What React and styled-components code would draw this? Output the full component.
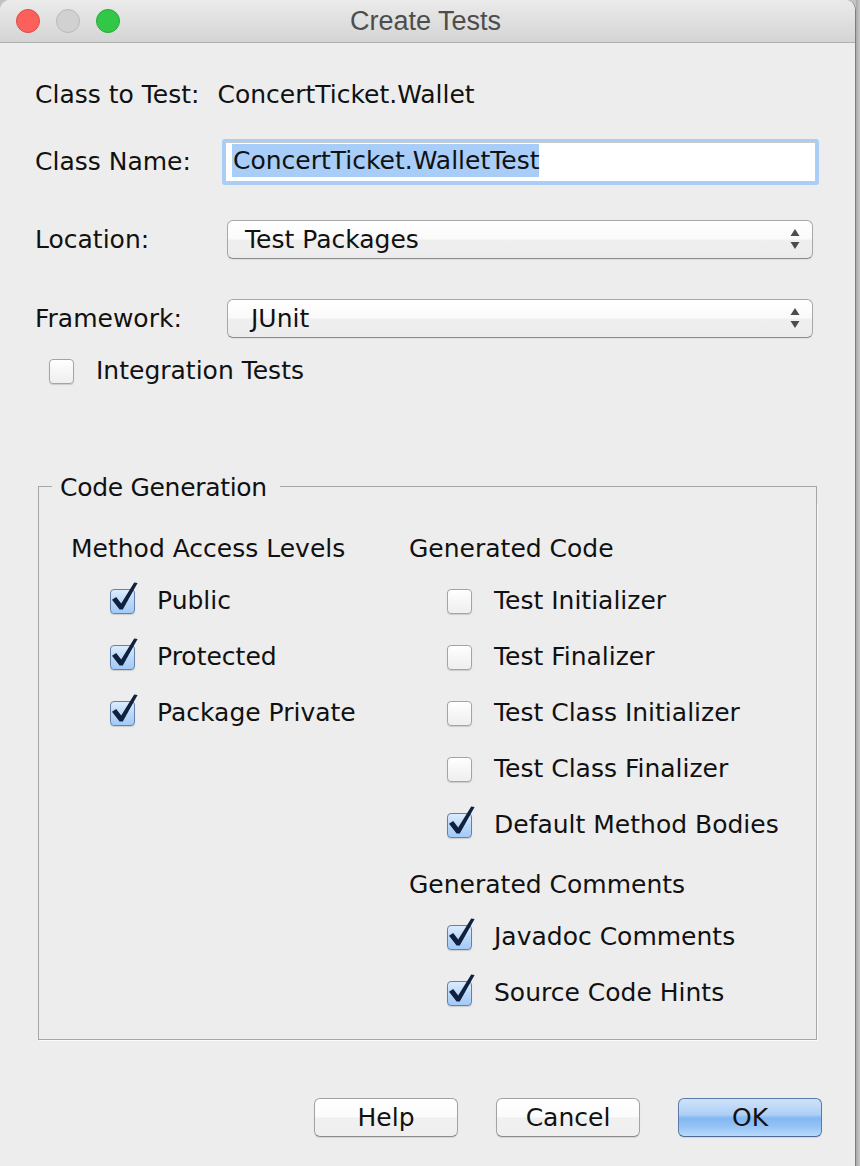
import React from 'react';
import styled, { createGlobalStyle } from 'styled-components';

const Global = createGlobalStyle`
  html, body { margin: 0; padding: 0; background: #c3c3c3; }
  body { font-family: "DejaVu Sans", "Liberation Sans", sans-serif; color: #111; }
  #root { width: 860px; height: 1166px; overflow: hidden; }
`;

const Screen = styled.div`
  display: flex;
  width: 860px;
  height: 1166px;
`;

const Backdrop = styled.div`
  flex: 1;
  background: linear-gradient(90deg, #a9a9a9, #c9c9c9);
`;

const Window = styled.div`
  width: 856px;
  height: 1166px;
  flex: none;
  box-sizing: border-box;
  display: flex;
  flex-direction: column;
  background: #ededed;
  border-right: 1px solid #7e7e7e;
  border-radius: 10px 10px 0 0;
  overflow: hidden;
`;

const TitleBar = styled.div`
  height: 43px;
  flex: none;
  box-sizing: border-box;
  display: grid;
  grid-template-columns: 1fr auto 1fr;
  align-items: center;
  background: linear-gradient(#ebebeb, #d4d4d4);
  border-bottom: 1px solid #afafaf;
`;

const Lights = styled.div`
  display: flex;
  gap: 16px;
  padding-left: 16px;
`;

const Light = styled.span`
  width: 24px;
  height: 24px;
  box-sizing: border-box;
  border-radius: 50%;
  background: ${p => p.$bg};
  border: 1px solid ${p => p.$edge};
`;

const Title = styled.div`
  font-family: "Liberation Sans", Arial, sans-serif;
  font-size: 27px;
  color: #4d4d4d;
  transform: translateX(-2px);
`;

const Body = styled.div`
  flex: 1;
  display: flex;
  flex-direction: column;
  padding-top: 37px;
  font-size: 25px;
`;

const Form = styled.div`
  display: flex;
  flex-direction: column;
  padding: 0 36px 0 35px;
`;

const InfoRow = styled.div`
  height: 30px;
  line-height: 30px;
  display: flex;
  gap: 18px;
  white-space: nowrap;
`;

const FieldRow = styled.div`
  display: grid;
  grid-template-columns: 187px 1fr;
  align-items: center;
  height: ${p => p.$h}px;
  margin-top: ${p => p.$mt}px;
`;

const Label = styled.span`
  line-height: 30px;
  white-space: nowrap;
`;

const TextField = styled.div`
  height: 46px;
  box-sizing: border-box;
  border: 3px solid #a9cdf4;
  border-radius: 3px;
  display: flex;
`;

const TextInner = styled.div`
  flex: 1;
  background: #fff;
  border: 1px solid #c9c9c9;
  padding: 1px 0 0 6px;
  display: flex;
  align-items: flex-start;
`;

const Selected = styled.span`
  background: #a8cdf9;
  height: 33px;
  line-height: 34px;
  padding-left: 1px;
  white-space: nowrap;
`;

const Combo = styled.div`
  height: 39px;
  box-sizing: border-box;
  margin: 0 6px 0 5px;
  border: 1px solid #a8a8a8;
  border-bottom-color: #8c8c8c;
  border-radius: 6px;
  background: linear-gradient(#ffffff 0%, #fafafa 48%, #efefef 52%, #ececec 100%);
  box-shadow: 0 1px 1px rgba(0, 0, 0, 0.06);
  display: flex;
  align-items: center;
  padding-left: ${p => p.$indent}px;
  padding-right: 12px;
`;

const ComboText = styled.span`
  flex: 1;
  line-height: 30px;
  white-space: nowrap;
`;

const Spinner = styled.svg`
  width: 10px;
  height: 21px;
  flex: none;
`;

const CheckRow = styled.div`
  display: flex;
  align-items: center;
  gap: 22px;
  height: ${p => p.$h || 56}px;
  margin-top: ${p => p.$mt || 0}px;
  padding-left: ${p => p.$indent}px;
`;

const Box = styled.span`
  width: 25px;
  height: 25px;
  flex: none;
  box-sizing: border-box;
  border-radius: 4px;
  border: 1px solid ${p => (p.$checked ? '#6482ab' : '#a4a4a4')};
  background: ${p =>
    p.$checked
      ? 'linear-gradient(#dcecfd, #b9d7f8 55%, #a2caf6)'
      : 'linear-gradient(#ffffff, #f6f6f6 50%, #efefef)'};
  box-shadow: 0 1px 1px rgba(0, 0, 0, 0.14);
  display: flex;
`;

const Tick = styled.svg`
  width: 25px;
  height: 25px;
  margin: -1px;
  overflow: visible;
  display: block;
`;

const Group = styled.div`
  margin: 87px 38px 0 38px;
  display: flex;
  flex-direction: column;
`;

const GroupHeader = styled.div`
  display: flex;
  height: 30px;
  &::before,
  &::after {
    content: '';
    margin-top: 13px;
    border-top: 1px solid #a6a6a6;
  }
  &::before {
    width: 13px;
    border-left: 1px solid #a6a6a6;
  }
  &::after {
    flex: 1;
    border-right: 1px solid #a6a6a6;
  }
`;

const GroupTitle = styled.span`
  line-height: 30px;
  padding: 0 13px 0 8px;
  letter-spacing: -0.3px;
  white-space: nowrap;
`;

const GroupBody = styled.div`
  border: 1px solid #a6a6a6;
  border-top: none;
  box-shadow: 1px 1px 0 #fbfbfb;
  padding: 31px 0 18px 32px;
  display: grid;
  grid-template-columns: 338px 1fr;
`;

const Column = styled.div`
  display: flex;
  flex-direction: column;
`;

const Heading = styled.div`
  line-height: 30px;
  height: 30px;
  margin-top: ${p => p.$mt || 0}px;
  margin-bottom: 9px;
  white-space: nowrap;
`;

const ButtonBar = styled.div`
  display: flex;
  justify-content: flex-end;
  gap: 38px;
  margin-top: 58px;
  padding-right: 33px;
`;

const Button = styled.div`
  width: 144px;
  height: 39px;
  box-sizing: border-box;
  border-radius: 6px;
  border: 1px solid ${p => (p.$primary ? '#5d7aa6' : '#a2a2a2')};
  border-bottom-color: ${p => (p.$primary ? '#4d6996' : '#8a8a8a')};
  background: ${p =>
    p.$primary
      ? 'linear-gradient(#cfe3fa 0%, #aecff6 42%, #82b7f1 52%, #95c4f5 75%, #b9dbfc 100%)'
      : 'linear-gradient(#ffffff 0%, #fbfbfb 48%, #f0f0f0 52%, #efefef 100%)'};
  box-shadow: 0 1px 1px rgba(0, 0, 0, 0.1);
  display: flex;
  align-items: center;
  justify-content: center;
  line-height: 30px;
`;

function Checkbox({ checked }) {
  return (
    <Box $checked={checked}>
      {checked && (
        <Tick viewBox="0 0 25 25">
          <path
            d="M2 10.8 L6.2 8 L11.2 14.6 L24.2 -6.6 L27.6 -6 L12.8 20.6 L9.6 20.6 Z"
            fill="#0f213f"
          />
        </Tick>
      )}
    </Box>
  );
}

function Option({ label, checked, indent }) {
  return (
    <CheckRow $indent={indent}>
      <Checkbox checked={checked} />
      <Label>{label}</Label>
    </CheckRow>
  );
}

function ArrowSpinner() {
  return (
    <Spinner viewBox="0 0 10 21">
      <path d="M5 0 L9.5 7 L0.5 7 Z" fill="#4c4c4c" />
      <path d="M0.5 13 L9.5 13 L5 20 Z" fill="#4c4c4c" />
    </Spinner>
  );
}

export default function App() {
  return (
    <>
      <Global />
      <Screen>
        <Window>
          <TitleBar>
            <Lights>
              <Light $bg="#fc605b" $edge="#de4a45" />
              <Light $bg="#d1d1d1" $edge="#b9b9b9" />
              <Light $bg="#33c748" $edge="#27a83a" />
            </Lights>
            <Title>Create Tests</Title>
            <span />
          </TitleBar>
          <Body>
            <Form>
              <InfoRow>
                <span>Class to Test:</span>
                <span>ConcertTicket.Wallet</span>
              </InfoRow>
              <FieldRow $h={46} $mt={29}>
                <Label>Class Name:</Label>
                <TextField>
                  <TextInner>
                    <Selected>ConcertTicket.WalletTest</Selected>
                  </TextInner>
                </TextField>
              </FieldRow>
              <FieldRow $h={39} $mt={35}>
                <Label>Location:</Label>
                <Combo $indent={17}>
                  <ComboText>Test Packages</ComboText>
                  <ArrowSpinner />
                </Combo>
              </FieldRow>
              <FieldRow $h={39} $mt={40}>
                <Label>Framework:</Label>
                <Combo $indent={23}>
                  <ComboText>JUnit</ComboText>
                  <ArrowSpinner />
                </Combo>
              </FieldRow>
              <CheckRow $h={30} $mt={18} $indent={14}>
                <Checkbox checked={false} />
                <Label>Integration Tests</Label>
              </CheckRow>
            </Form>

            <Group>
              <GroupHeader>
                <GroupTitle>Code Generation</GroupTitle>
              </GroupHeader>
              <GroupBody>
                <Column>
                  <Heading>Method Access Levels</Heading>
                  <Option indent={39} checked label="Public" />
                  <Option indent={39} checked label="Protected" />
                  <Option indent={39} checked label="Package Private" />
                </Column>
                <Column>
                  <Heading>Generated Code</Heading>
                  <Option indent={38} checked={false} label="Test Initializer" />
                  <Option indent={38} checked={false} label="Test Finalizer" />
                  <Option indent={38} checked={false} label="Test Class Initializer" />
                  <Option indent={38} checked={false} label="Test Class Finalizer" />
                  <Option indent={38} checked label="Default Method Bodies" />
                  <Heading $mt={17}>Generated Comments</Heading>
                  <Option indent={38} checked label="Javadoc Comments" />
                  <Option indent={38} checked label="Source Code Hints" />
                </Column>
              </GroupBody>
            </Group>

            <ButtonBar>
              <Button>Help</Button>
              <Button>Cancel</Button>
              <Button $primary>OK</Button>
            </ButtonBar>
          </Body>
        </Window>
        <Backdrop />
      </Screen>
    </>
  );
}
